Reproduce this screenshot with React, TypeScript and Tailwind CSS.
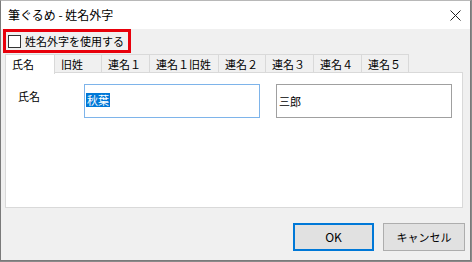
const font = { fontFamily: '"Noto Sans CJK JP", "Noto Sans", sans-serif' };

const tabs = [
  { label: "氏名", w: "w-[50px]" },
  { label: "旧姓", w: "w-[47px]" },
  { label: "連名１", w: "w-[48px]" },
  { label: "連名１旧姓", w: "w-[69px]" },
  { label: "連名２", w: "w-[47px]" },
  { label: "連名３", w: "w-[48px]" },
  { label: "連名４", w: "w-[48px]" },
  { label: "連名５", w: "w-[47px]" },
];

export default function App() {
  return (
    <div className="w-[472px] h-[262px] bg-[#8a8a8a] overflow-hidden" style={font}>
      <div className="w-[471px] h-[261px] flex flex-col border border-[#7a7a7a] border-t-[#b8b8b8] bg-[#f0f0f0]">
        {/* Title bar */}
        <div className="h-[28px] bg-white flex items-center justify-between pl-[7px] pr-[9px] text-[12px] text-black">
          <span className="leading-none">筆ぐるめ - 姓名外字</span>
          <svg width="11" height="11" viewBox="0 0 11 11" className="mt-[1px]">
            <path d="M0.5 0.5 L10.5 10.5 M10.5 0.5 L0.5 10.5" stroke="#222" strokeWidth="1" fill="none" />
          </svg>
        </div>

        {/* Checkbox highlighted */}
        <div className="ml-[2px] w-[128px] h-[24px] border-[3px] border-[#e8000b] flex items-center">
          <div className="ml-[2px] w-[13px] h-[13px] border border-[#333] bg-white" />
          <span className="ml-[4px] text-[11px] leading-none text-black">姓名外字を使用する</span>
        </div>

        {/* Tabs */}
        <div className="ml-[4px] mt-[1px] flex h-[19px]">
          {tabs.map((t, i) => (
            <div
              key={t.label}
              className={
                "h-[19px] border border-[#d9d9d9] flex items-center text-[11px] leading-none text-black pl-[6px] " +
                t.w +
                (i === 0 ? " bg-white border-b-0 relative z-10 h-[20px]" : " bg-[#f0f0f0] border-l-0 border-b-0")
              }
            >
              {t.label}
            </div>
          ))}
        </div>

        {/* Panel */}
        <div className="ml-[4px] w-[458px] h-[136px] -mt-[1px] bg-white border border-[#d9d9d9] flex items-start pt-[11px]">
          <span className="ml-[12px] mt-[7px] w-[66px] text-[11px] leading-none text-black">氏名</span>
          <div className="w-[176px] h-[34px] border border-[#7eb4ea] pl-[1px] pt-[1px]">
            <span className="inline-block bg-[#0078d7] text-white text-[11px] leading-[14px] px-[1px]">秋葉</span>
          </div>
          <div className="ml-[16px] w-[176px] h-[34px] border border-[#a0a0a0] pl-[2px] pt-[2px]">
            <span className="text-[11px] leading-[14px] text-black">三郎</span>
          </div>
        </div>

        {/* Buttons */}
        <div className="flex justify-end gap-[9px] mt-[15px] mr-[5px]">
          <div className="w-[81px] h-[28px] bg-[#e1e1e1] border-2 border-[#0078d7] flex items-center justify-center text-[12px] text-black">
            OK
          </div>
          <div className="w-[82px] h-[28px] bg-[#e1e1e1] border border-[#adadad] flex items-center justify-center text-[11px] text-black">
            キャンセル
          </div>
        </div>
      </div>
    </div>
  );
}
